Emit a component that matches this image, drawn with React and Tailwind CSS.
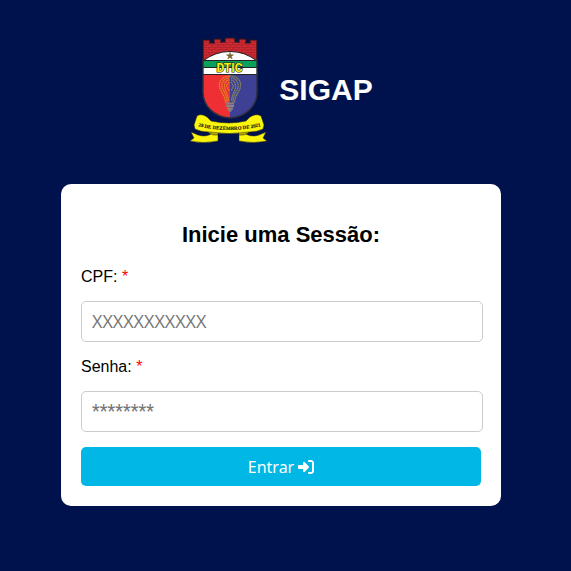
import { FaRightToBracket } from "react-icons/fa6";

function Emblem() {
  return (
    <svg viewBox="-1 -1 78 108" className="h-[108px] w-[78px]" role="img" aria-label="Brasão DTIC">
      <defs>
        <pattern id="bricks" width="6" height="5" patternUnits="userSpaceOnUse">
          <rect width="6" height="5" fill="#d22a32" />
          <path d="M0 .3H6M0 2.8H6M1 0V2.800M4 2.800V5" stroke="#8a1a24" strokeWidth=".5" />
        </pattern>
        <clipPath id="shield">
          <path d="M13 24H67V55C67 69 56 80 40 81C24 80 13 69 13 55Z" />
        </clipPath>
        <path id="motto" d="M5 88.500Q39 97.500 74 88.500" />
      </defs>
      <path d="M13 28V3H20V6H24V2H31V5H35V1H45V5H49V2H56V6H60V3H67V28Z" fill="url(#bricks)" stroke="#25151f" strokeWidth="1.200" />
      <g clipPath="url(#shield)">
        <path d="M13 37H40V82H13Z" fill="#ee3035" />
        <path d="M40 37H67V82H40Z" fill="#3d4095" />
      </g>
      <path d="M13 24Q25 14.500 40 14.500Q55 14.500 67 24V38H13Z" fill="#fff" />
      <path d="M13 24Q25 14.500 40 14.500Q55 14.500 67 24" fill="none" stroke="#222" strokeWidth="1" />
      <path d="M13 23.500H67V30H13Z" fill="#0aa05c" />
      <path d="M13 23.500H67M13 30.500H67M13 37.500H67" stroke="#222" strokeWidth="1" />
      <path d="M13 22V55C13 69 24 80 40 81C56 80 67 69 67 55V22" fill="none" stroke="#30303c" strokeWidth="1.400" />
      <path d="M40 15.300L40.900 17.800H43.500L41.400 19.400L42.200 22L40 20.400L37.800 22L38.600 19.400L36.500 17.800H39.100Z" fill="#7d6430" stroke="#7d6430" strokeWidth=".5" />
      <text x="39.500" y="34.500" textAnchor="middle" fontFamily="Liberation Sans Narrow, Roboto, sans-serif" fontSize="12" fontWeight="700" fill="#f7ec16" stroke="#28270d" strokeWidth="1.200" paintOrder="stroke">DTIC</text>
      <g fill="none" strokeWidth="1.200">
        <path d="M40 39C32 39 28.500 45 29.500 49C30 55 35 57 35.500 66M39 41C34 41 31 46 32 50C33 54 37 58 37 65M39 43C36 43 34 47 34.500 50C35 54 38 57 38.500 64M39 45L36.500 49L39 54" stroke="#dd8a22" strokeDasharray="1.500 .5" />
        <path d="M40 39C48 39 51.500 45 50.500 49C50 55 45 57 44.500 66M41 41C46 41 49 46 48 50C47 54 43 58 43 65M41 43C44 43 46 47 45.500 50C45 54 42 57 41.500 64M41 45L43.500 49L41 54" stroke="#8a8a5c" strokeDasharray="1.500 .5" />
        <path d="M36 66.500H44M36 69H44M37 71.500H43M38.500 73.500H41.500" stroke="#8d8280" strokeWidth="1.800" />
      </g>
      <g fill="#fbf50b" stroke="#302d10" strokeWidth=".5" strokeLinejoin="round">
        <path d="M1 95L8 98Q17 101 24 95L28 97V104Q13 107 0 104L4 101Z" />
        <path d="M76 95L69 98Q60 101 53 95L49 97V104Q64 107 77 104L73 101Z" />
        <path d="M4 88L7 79Q11 76 17 80L21 84Q39 88 56 84L60 80Q66 76 71 79L74 88L73 92Q67 95 59 95Q39 98 19 95Q11 95 5 92Z" />
        <path d="M18 95Q22 99 28 98V96M59 95Q55 99 49 98V96" fill="#b6a80b" />
      </g>
      <text fontFamily="Liberation Serif, serif" fontSize="5" fontWeight="700" fill="#111" stroke="#111" strokeWidth=".1">
        <textPath href="#motto" startOffset="50%" textAnchor="middle">28 DE DEZEMBRO DE 2021</textPath>
      </text>
    </svg>
  );
}

function Field({ id, label, type, placeholder, fontClass }) {
  return (
    <div className="flex flex-col gap-3">
      <label htmlFor={id} className="leading-6">
        {label} <span className="text-[#ff0000]">*</span>
      </label>
      <input
        id={id}
        type={type}
        placeholder={placeholder}
        required
        className={`h-[41px] w-[calc(100%+2px)] rounded-[5px] border border-[#ccc] bg-white px-[10px] pb-[2px] placeholder:text-[#757575] ${fontClass}`}
      />
    </div>
  );
}

export default function App() {
  return (
    <div className="flex min-h-screen flex-col items-center bg-[#00124e] pt-9 pr-[9px] pb-16 font-['Liberation_Sans',Arial,sans-serif] text-base text-black">
      <header className="flex items-center gap-3">
        <Emblem />
        <h1 className="text-[30px] leading-9 font-bold text-white">SIGAP</h1>
      </header>
      <main className="mt-10 w-full max-w-[440px] rounded-[10px] bg-white p-5">
        <form className="flex flex-col">
          <h2 className="my-4 text-center text-[22px] leading-[29px] font-bold">Inicie uma Sessão:</h2>
          <div className="flex flex-col gap-[13px]">
            <Field id="cpf" label="CPF:" type="text" placeholder="XXXXXXXXXXX" fontClass="font-['Open_Sans',sans-serif] text-lg" />
            <Field id="senha" label="Senha:" type="password" placeholder="********" fontClass="font-[Roboto,sans-serif] text-lg" />
          </div>
          <button type="submit" className="mt-[15px] flex h-[39px] w-full items-center justify-center gap-1 rounded-[5px] bg-[#00b7e5] font-['Noto_Sans',sans-serif] text-base text-white">
            Entrar <FaRightToBracket aria-hidden="true" />
          </button>
        </form>
      </main>
    </div>
  );
}
